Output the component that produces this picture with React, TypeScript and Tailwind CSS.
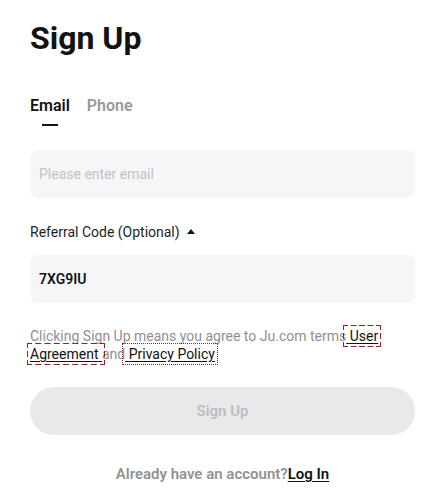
import { useState } from 'react'

const font = { fontFamily: 'Roboto, "Noto Sans", sans-serif' }

export default function App() {
  const [tab, setTab] = useState<'email' | 'phone'>('email')
  const [email, setEmail] = useState('')
  const [code, setCode] = useState('7XG9IU')

  return (
    <div className="min-h-screen bg-white px-[30px] pt-[18px] text-[#121212]" style={font}>
      <h1 className="text-[32px] font-bold leading-[40px]">Sign Up</h1>

      <div className="mt-[36px] flex gap-[17px] text-[16px] font-semibold leading-[24px]">
        <button
          className={'flex flex-col items-center ' + (tab === 'email' ? 'text-[#121212]' : 'text-[#999999]')}
          onClick={() => setTab('email')}
        >
          Email
          <span className={'mt-[6px] h-[2px] w-[16px] ' + (tab === 'email' ? 'bg-[#121212]' : 'bg-transparent')} />
        </button>
        <button
          className={'flex flex-col items-center ' + (tab === 'phone' ? 'text-[#121212]' : 'text-[#999999]')}
          onClick={() => setTab('phone')}
        >
          Phone
          <span className={'mt-[6px] h-[2px] w-[16px] ' + (tab === 'phone' ? 'bg-[#121212]' : 'bg-transparent')} />
        </button>
      </div>

      <input
        value={email}
        onChange={(e) => setEmail(e.target.value)}
        placeholder="Please enter email"
        className="mt-[24px] block h-[48px] w-full rounded-lg bg-[#f6f6f8] px-[9px] text-[14px] outline-none placeholder:text-[#c2c2c6]"
      />

      <div className="mt-[24px] flex items-center gap-[7px] text-[14px] leading-[20px] text-[#1e1e1e]">
        <span>Referral Code (Optional)</span>
        <svg width="8" height="5" viewBox="0 0 8 5" className="mt-[-2px]">
          <path d="M4 0 L8 5 L0 5 Z" fill="#121212" />
        </svg>
      </div>

      <input
        value={code}
        onChange={(e) => setCode(e.target.value)}
        className="mt-[13px] block h-[48px] w-full rounded-lg bg-[#f6f6f8] px-[9px] text-[14px] font-semibold text-[#121212] outline-none"
      />

      <p className="mt-[24px] text-[14px] leading-[18px] text-[#8f8f93]">
        Clicking Sign Up means you agree to Ju.com terms
        <a
          href="#"
          className="text-[#121212] underline underline-offset-2 outline-1 outline-offset-2 outline-dashed outline-[#8b2323]"
        >
          {' '}User Agreement{' '}
        </a>
        and
        <a
          href="#"
          className="text-[#121212] underline underline-offset-2 outline-1 outline-offset-2 outline-dotted outline-[#8b2323]"
        >
          {' '}Privacy Policy
        </a>
      </p>

      <button className="mt-[24px] block h-[48px] w-full rounded-full bg-[#e9e9eb] text-[15px] font-semibold text-[#bdbdc1]">
        Sign Up
      </button>

      <div className="mt-[28px] text-center text-[15px] font-semibold text-[#929296]">
        Already have an account?
        <a href="#" className="text-[#121212] underline underline-offset-2">
          Log In
        </a>
      </div>
    </div>
  )
}
